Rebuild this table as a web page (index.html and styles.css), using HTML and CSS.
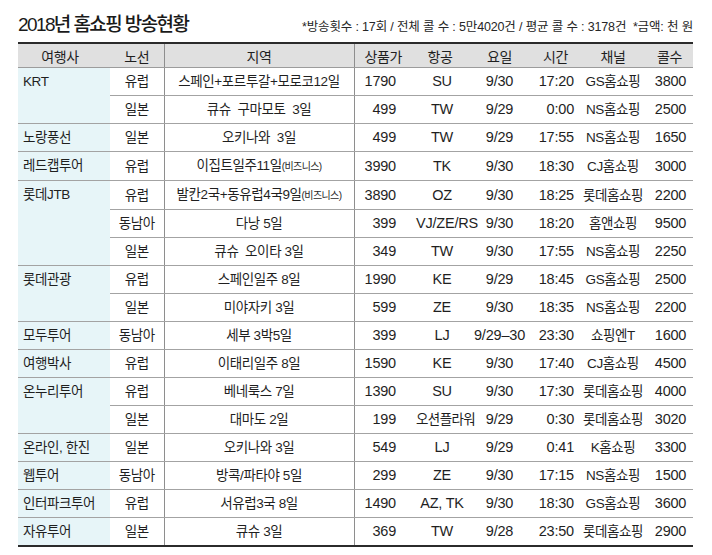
FILE: index.html
```html
<!DOCTYPE html>
<html lang="ko">
<head>
<meta charset="utf-8">
<title>2018년 홈쇼핑 방송현황</title>
<link rel="stylesheet" href="styles.css">
</head>
<body>
<div class="page">
  <div class="head">
    <h1 class="title">2018년 홈쇼핑 방송현황</h1>
    <p class="note">*방송횟수 : 17회 / 전체 콜 수 : 5만4020건 / 평균 콜 수 : 3178건 &nbsp;*금액: 천 원</p>
  </div>
  <table class="tbl">
    <colgroup>
      <col class="w-co"><col class="w-rt"><col class="w-rg"><col class="w-pr"><col class="w-al"><col class="w-dy"><col class="w-tm"><col class="w-ch"><col class="w-ca">
    </colgroup>
    <thead>
      <tr>
        <th class="hco">여행사</th><th>노선</th><th class="rg">지역</th><th>상품가</th><th>항공</th><th>요일</th><th>시간</th><th>채널</th><th>콜수</th>
      </tr>
    </thead>
    <tbody>
      <tr><td class="co" rowspan="2">KRT</td><td class="rt">유럽</td><td class="rg">스페인+포르투갈+모로코12일</td><td class="pr">1790</td><td class="al">SU</td><td class="dy">9/30</td><td class="tm">17:20</td><td class="ch">GS홈쇼핑</td><td class="ca">3800</td></tr>
      <tr><td class="rt">일본</td><td class="rg">큐슈&nbsp; 구마모토&nbsp; 3일</td><td class="pr">499</td><td class="al">TW</td><td class="dy">9/29</td><td class="tm">0:00</td><td class="ch">NS홈쇼핑</td><td class="ca">2500</td></tr>
      <tr><td class="co">노랑풍선</td><td class="rt">일본</td><td class="rg">오키나와&nbsp; 3일</td><td class="pr">499</td><td class="al">TW</td><td class="dy">9/29</td><td class="tm">17:55</td><td class="ch">NS홈쇼핑</td><td class="ca">1650</td></tr>
      <tr><td class="co">레드캡투어</td><td class="rt">유럽</td><td class="rg">이집트일주11일<span class="sm">(비즈니스)</span></td><td class="pr">3990</td><td class="al">TK</td><td class="dy">9/30</td><td class="tm">18:30</td><td class="ch">CJ홈쇼핑</td><td class="ca">3000</td></tr>
      <tr><td class="co" rowspan="3">롯데JTB</td><td class="rt">유럽</td><td class="rg">발칸2국+동유럽4국9일<span class="sm">(비즈니스)</span></td><td class="pr">3890</td><td class="al">OZ</td><td class="dy">9/30</td><td class="tm">18:25</td><td class="ch">롯데홈쇼핑</td><td class="ca">2200</td></tr>
      <tr><td class="rt">동남아</td><td class="rg">다낭 5일</td><td class="pr">399</td><td class="al">VJ/ZE/RS</td><td class="dy">9/30</td><td class="tm">18:20</td><td class="ch">홈앤쇼핑</td><td class="ca">9500</td></tr>
      <tr><td class="rt">일본</td><td class="rg">큐슈&nbsp; 오이타 3일</td><td class="pr">349</td><td class="al">TW</td><td class="dy">9/30</td><td class="tm">17:55</td><td class="ch">NS홈쇼핑</td><td class="ca">2250</td></tr>
      <tr><td class="co" rowspan="2">롯데관광</td><td class="rt">유럽</td><td class="rg">스페인일주 8일</td><td class="pr">1990</td><td class="al">KE</td><td class="dy">9/29</td><td class="tm">18:45</td><td class="ch">GS홈쇼핑</td><td class="ca">2500</td></tr>
      <tr><td class="rt">일본</td><td class="rg">미야자키 3일</td><td class="pr">599</td><td class="al">ZE</td><td class="dy">9/30</td><td class="tm">18:35</td><td class="ch">NS홈쇼핑</td><td class="ca">2200</td></tr>
      <tr><td class="co">모두투어</td><td class="rt">동남아</td><td class="rg">세부 3박5일</td><td class="pr">399</td><td class="al">LJ</td><td class="dy">9/29–30</td><td class="tm">23:30</td><td class="ch">쇼핑엔T</td><td class="ca">1600</td></tr>
      <tr><td class="co">여행박사</td><td class="rt">유럽</td><td class="rg">이태리일주 8일</td><td class="pr">1590</td><td class="al">KE</td><td class="dy">9/30</td><td class="tm">17:40</td><td class="ch">CJ홈쇼핑</td><td class="ca">4500</td></tr>
      <tr><td class="co" rowspan="2">온누리투어</td><td class="rt">유럽</td><td class="rg">베네룩스 7일</td><td class="pr">1390</td><td class="al">SU</td><td class="dy">9/30</td><td class="tm">17:30</td><td class="ch">롯데홈쇼핑</td><td class="ca">4000</td></tr>
      <tr><td class="rt">일본</td><td class="rg">대마도 2일</td><td class="pr">199</td><td class="al al-ko">오션플라워</td><td class="dy">9/29</td><td class="tm">0:30</td><td class="ch">롯데홈쇼핑</td><td class="ca">3020</td></tr>
      <tr><td class="co">온라인, 한진</td><td class="rt">일본</td><td class="rg">오키나와 3일</td><td class="pr">549</td><td class="al">LJ</td><td class="dy">9/29</td><td class="tm">0:41</td><td class="ch">K홈쇼핑</td><td class="ca">3300</td></tr>
      <tr><td class="co">웹투어</td><td class="rt">동남아</td><td class="rg">방콕/파타야 5일</td><td class="pr">299</td><td class="al">ZE</td><td class="dy">9/30</td><td class="tm">17:15</td><td class="ch">NS홈쇼핑</td><td class="ca">1500</td></tr>
      <tr><td class="co">인터파크투어</td><td class="rt">유럽</td><td class="rg">서유럽3국 8일</td><td class="pr">1490</td><td class="al">AZ, TK</td><td class="dy">9/30</td><td class="tm">18:30</td><td class="ch">GS홈쇼핑</td><td class="ca">3600</td></tr>
      <tr class="last"><td class="co">자유투어</td><td class="rt">일본</td><td class="rg">큐슈 3일</td><td class="pr">369</td><td class="al">TW</td><td class="dy">9/28</td><td class="tm">23:50</td><td class="ch">롯데홈쇼핑</td><td class="ca">2900</td></tr>
    </tbody>
  </table>
</div>
</body>
</html>
```

FILE: styles.css
```css
html, body {
  margin: 0;
  padding: 0;
  background: #ffffff;
}
body {
  font-family: "Liberation Sans", "Noto Sans CJK KR", sans-serif;
  color: #1f1f1f;
}
.page {
  width: 675px;
  padding: 0 0 0 18px;
}
.head {
  display: flex;
  justify-content: space-between;
  align-items: baseline;
  height: 42px;
}
.title {
  margin: 0;
  padding-top: 13px;
  font-size: 19px;
  font-weight: 500;
  letter-spacing: -1.6px;
  line-height: 24px;
  color: #1a1a1a;
}
.note {
  margin: 0;
  font-size: 12.5px;
  letter-spacing: -0.15px;
  line-height: 16px;
  color: #262626;
}
.tbl {
  width: 675px;
  table-layout: fixed;
  border-collapse: collapse;
  font-size: 13.5px;
  letter-spacing: -0.4px;
}
.w-co { width: 92px; }
.w-rt { width: 54px; }
.w-rg { width: 190px; }
.w-pr { width: 58px; }
.w-al { width: 56px; }
.w-dy { width: 63px; }
.w-tm { width: 49px; }
.w-ch { width: 66px; }
.w-ca { width: 47px; }

.tbl th {
  height: 23px;
  padding: 0;
  background: #e0e0e0;
  font-weight: 400;
  font-size: 14px;
  text-align: center;
  border-top: 2px solid #2b2b2b;
  border-bottom: 1px solid #9c9c9c;
  white-space: nowrap;
}
.tbl th.hco { padding-right: 8px; }
.tbl td {
  height: 27px;
  padding: 0;
  border-bottom: 1px solid #a3a3a3;
  white-space: nowrap;
  text-align: center;
  vertical-align: middle;
  line-height: 27px;
}
.tbl th.rg, .tbl td.rg {
  border-left: 1px solid #8e8e8e;
  border-right: 1px solid #8e8e8e;
}
.tbl td.co {
  background: #e7f5f8;
  text-align: left;
  padding-left: 5px;
  vertical-align: top;
}
.tbl td.pr, .tbl td.al, .tbl td.dy, .tbl td.tm, .tbl td.ca {
  font-size: 14.5px;
  letter-spacing: -0.2px;
}
.tbl td.al-ko {
  font-size: 13.5px;
  letter-spacing: -0.6px;
}
.tbl td.pr {
  text-align: right;
  padding-right: 16px;
}
.tbl td.tm {
  text-align: right;
  padding-right: 6px;
}
.tbl td.ca { padding-left: 2px; }
.tbl td.al { padding-left: 4px; }
.tbl tr.last td {
  border-bottom: 2px solid #2b2b2b;
}
.sm {
  font-size: 10px;
  letter-spacing: -0.6px;
}
```
